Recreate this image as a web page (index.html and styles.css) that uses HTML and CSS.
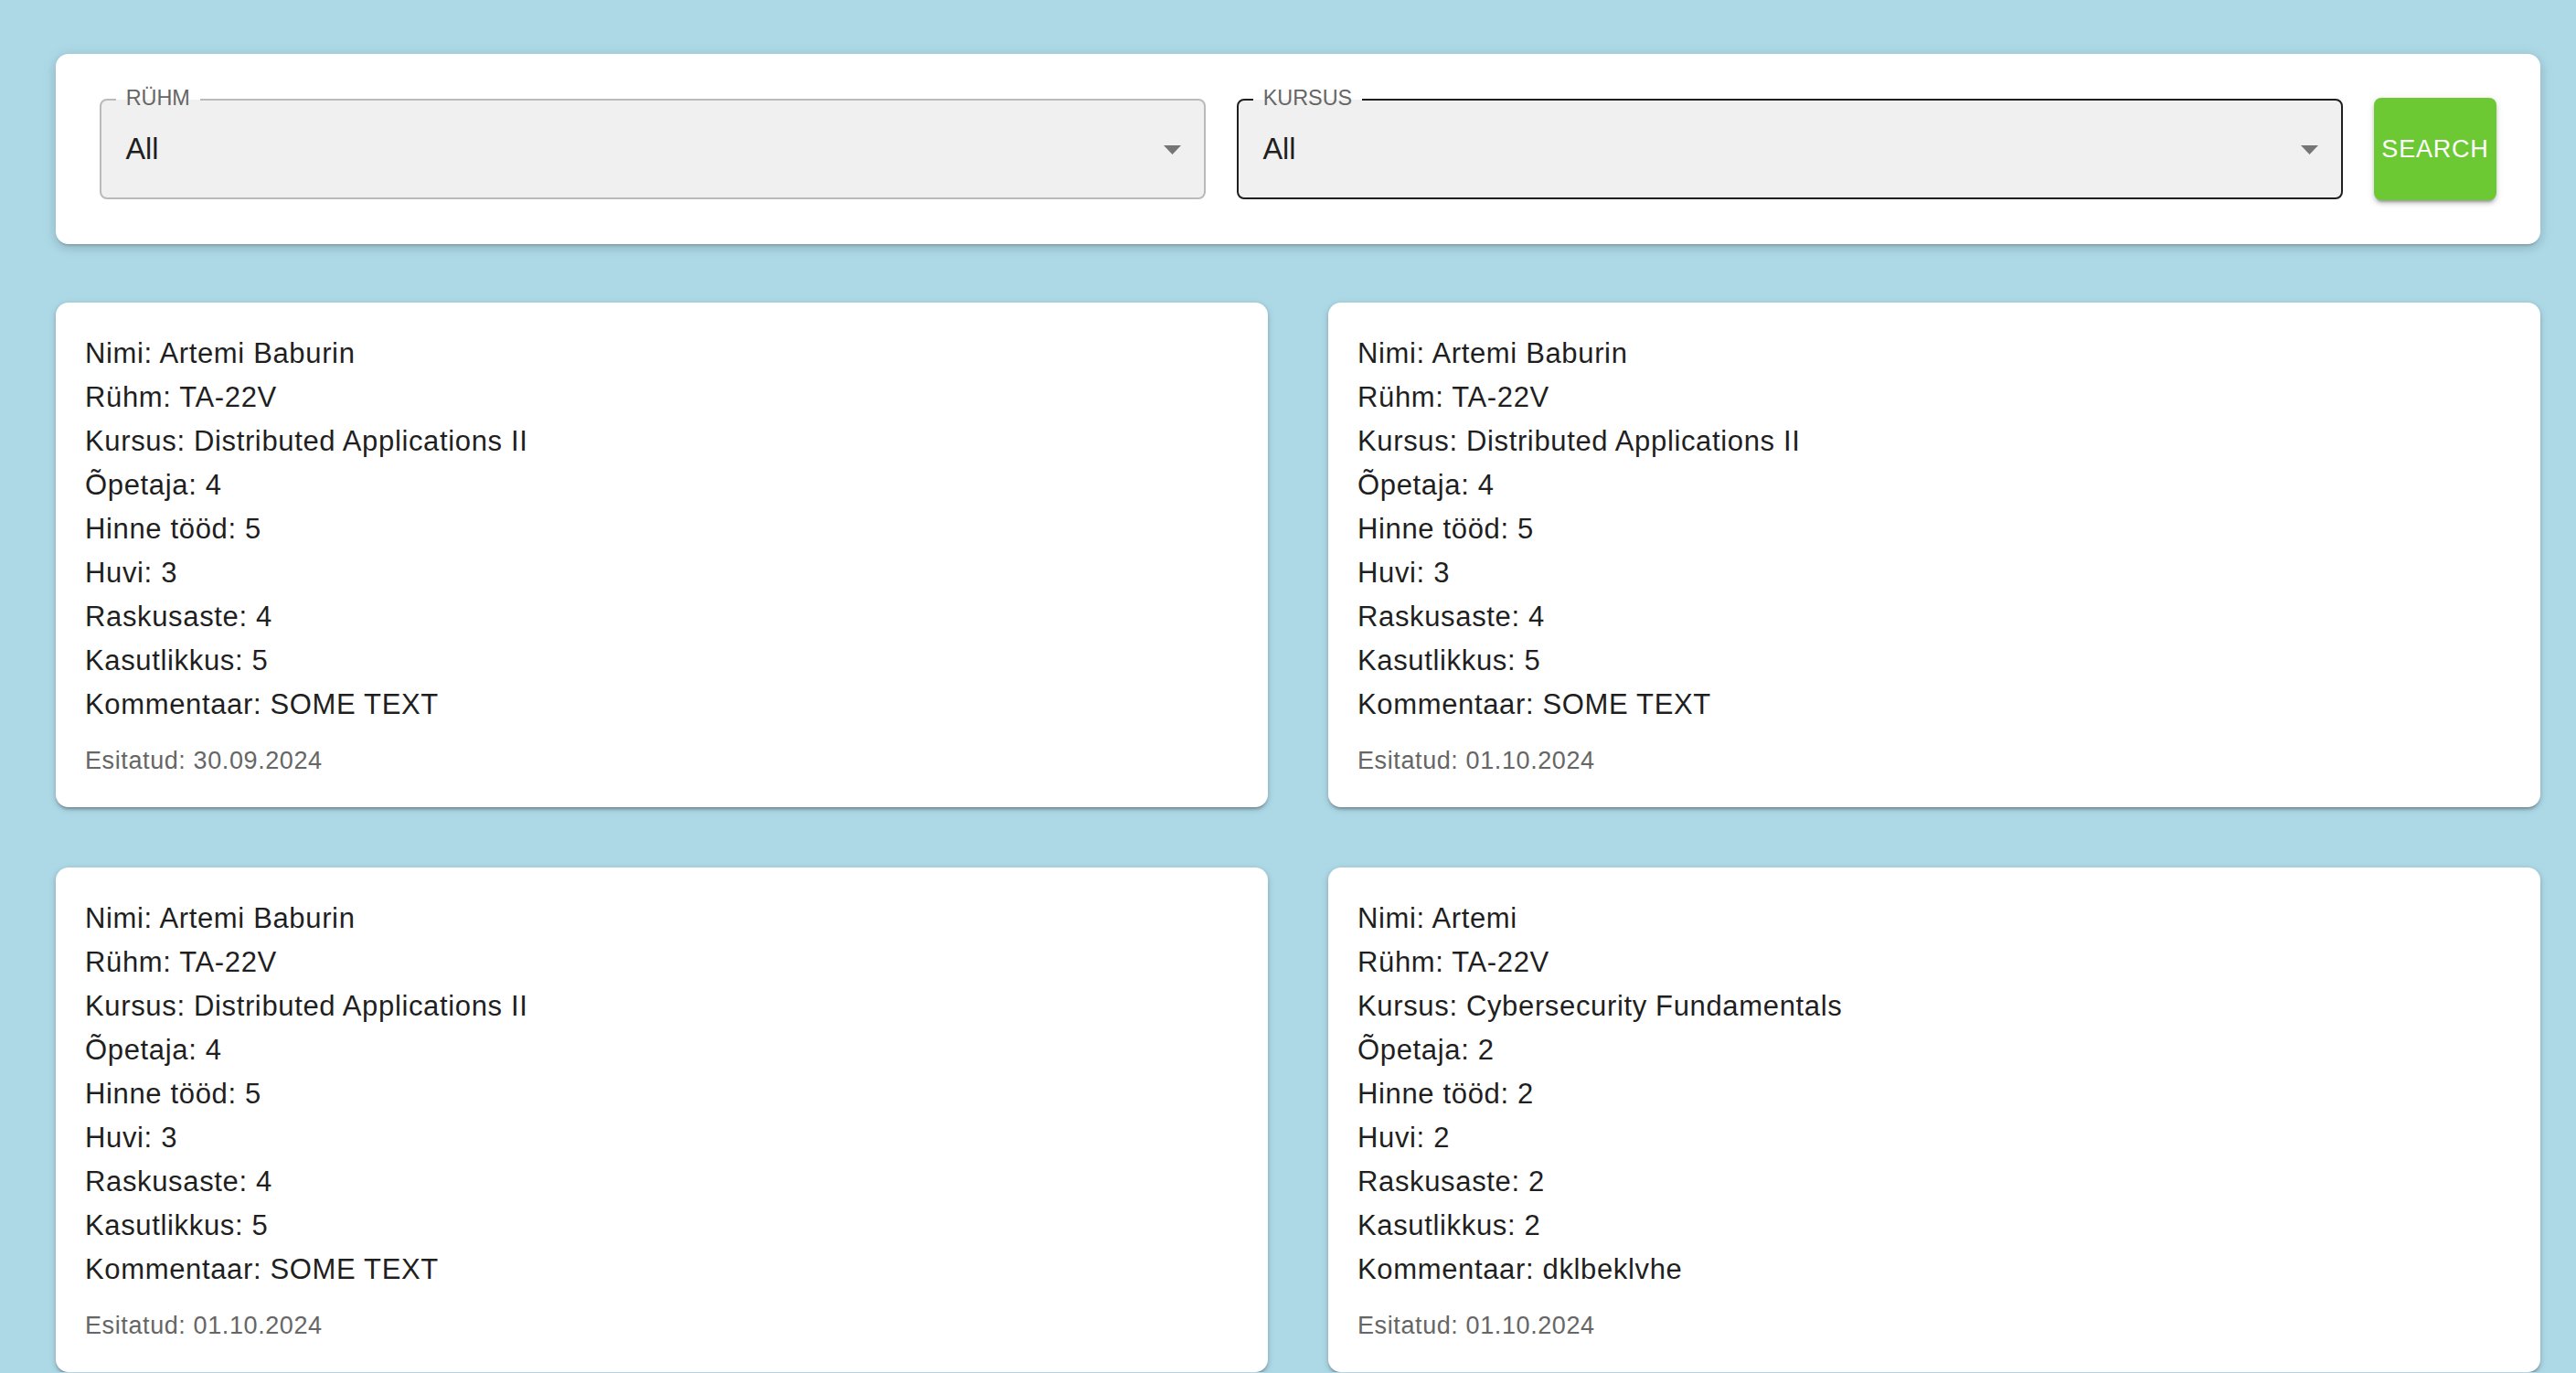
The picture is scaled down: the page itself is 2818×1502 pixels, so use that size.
FILE: index.html
```html
<!DOCTYPE html>
<html lang="et">
<head>
<meta charset="utf-8">
<title>Tagasiside</title>
<link rel="stylesheet" href="styles.css">
</head>
<body>
<div class="page">
  <section class="filter-card">
    <div class="field">
      <span class="field-label">RÜHM</span>
      <span class="field-value">All</span>
      <svg class="arrow" width="19" height="10" viewBox="0 0 19 10"><polygon points="0,0 19,0 9.5,10" fill="#757575"/></svg>
    </div>
    <div class="field field--active">
      <span class="field-label">KURSUS</span>
      <span class="field-value">All</span>
      <svg class="arrow" width="19" height="10" viewBox="0 0 19 10"><polygon points="0,0 19,0 9.5,10" fill="#757575"/></svg>
    </div>
    <button class="search-btn" type="button">SEARCH</button>
  </section>

  <section class="results">
    <article class="result-card">
      <p class="line">Nimi: Artemi Baburin</p>
      <p class="line">Rühm: TA-22V</p>
      <p class="line">Kursus: Distributed Applications II</p>
      <p class="line">Õpetaja: 4</p>
      <p class="line">Hinne tööd: 5</p>
      <p class="line">Huvi: 3</p>
      <p class="line">Raskusaste: 4</p>
      <p class="line">Kasutlikkus: 5</p>
      <p class="line">Kommentaar: SOME TEXT</p>
      <p class="date">Esitatud: 30.09.2024</p>
    </article>
    <article class="result-card">
      <p class="line">Nimi: Artemi Baburin</p>
      <p class="line">Rühm: TA-22V</p>
      <p class="line">Kursus: Distributed Applications II</p>
      <p class="line">Õpetaja: 4</p>
      <p class="line">Hinne tööd: 5</p>
      <p class="line">Huvi: 3</p>
      <p class="line">Raskusaste: 4</p>
      <p class="line">Kasutlikkus: 5</p>
      <p class="line">Kommentaar: SOME TEXT</p>
      <p class="date">Esitatud: 01.10.2024</p>
    </article>
    <article class="result-card">
      <p class="line">Nimi: Artemi Baburin</p>
      <p class="line">Rühm: TA-22V</p>
      <p class="line">Kursus: Distributed Applications II</p>
      <p class="line">Õpetaja: 4</p>
      <p class="line">Hinne tööd: 5</p>
      <p class="line">Huvi: 3</p>
      <p class="line">Raskusaste: 4</p>
      <p class="line">Kasutlikkus: 5</p>
      <p class="line">Kommentaar: SOME TEXT</p>
      <p class="date">Esitatud: 01.10.2024</p>
    </article>
    <article class="result-card">
      <p class="line">Nimi: Artemi</p>
      <p class="line">Rühm: TA-22V</p>
      <p class="line">Kursus: Cybersecurity Fundamentals</p>
      <p class="line">Õpetaja: 2</p>
      <p class="line">Hinne tööd: 2</p>
      <p class="line">Huvi: 2</p>
      <p class="line">Raskusaste: 2</p>
      <p class="line">Kasutlikkus: 2</p>
      <p class="line">Kommentaar: dklbeklvhe</p>
      <p class="date">Esitatud: 01.10.2024</p>
    </article>
  </section>
</div>
</body>
</html>
```

FILE: styles.css
```css
html, body {
  margin: 0;
  padding: 0;
}

body {
  background: #add8e6;
  font-family: "Liberation Sans", Arial, sans-serif;
  color: #212121;
}

.page {
  padding: 59px 39px 0 61px;
}

.filter-card {
  display: flex;
  align-items: center;
  gap: 34px;
  background: #fff;
  border-radius: 14px;
  padding: 48px;
  box-shadow: 0 4px 2px -2px rgba(0,0,0,0.12), 0 4px 10px 0 rgba(0,0,0,0.12), 0 2px 18px 0 rgba(0,0,0,0.08);
}

.field {
  position: relative;
  flex: 1;
  height: 110px;
  box-sizing: border-box;
  border: 2px solid #bababa;
  border-radius: 8px;
  background: #f0f0f0;
  display: flex;
  align-items: center;
  padding: 0 25px 0 26.5px;
}

.field--active {
  border-color: #1f1f1f;
}

.field-label {
  position: absolute;
  left: 15.7px;
  top: -16.2px;
  padding: 0 11px;
  font-size: 23.4px;
  line-height: 26px;
  color: #666;
  background: linear-gradient(to bottom, #fff 0, #fff 15px, #f0f0f0 15px, #f0f0f0 100%);
}

.field-value {
  flex: 1;
  font-size: 32.4px;
  color: #1f1f1f;
}

.arrow {
  display: block;
  margin-top: 2px;
}

.search-btn {
  width: 134px;
  height: 112px;
  flex: none;
  border: none;
  border-radius: 8px;
  background: #6cc934;
  color: #fff;
  font-family: "Liberation Sans", Arial, sans-serif;
  font-size: 27px;
  letter-spacing: 0.8px;
  padding: 0;
  text-align: center;
  box-shadow: 0 5px 2px -3px rgba(0,0,0,0.2), 0 4px 4px 0 rgba(0,0,0,0.14), 0 2px 9px 0 rgba(0,0,0,0.12);
}

.results {
  display: grid;
  grid-template-columns: 1fr 1fr;
  column-gap: 66px;
  row-gap: 66px;
  margin-top: 64px;
}

.result-card {
  background: #fff;
  border-radius: 14px;
  padding: 32px 32px 31px;
  box-shadow: 0 4px 3px -2px rgba(0,0,0,0.2), 0 2px 4px 0 rgba(0,0,0,0.14), 0 2px 9px 0 rgba(0,0,0,0.12);
}

.line {
  margin: 0;
  font-size: 31px;
  line-height: 48px;
  letter-spacing: 0.65px;
  color: #1f1f1f;
}

.date {
  margin: 17px 0 0;
  font-size: 27px;
  line-height: 40px;
  letter-spacing: 0.6px;
  color: #666;
}
```
